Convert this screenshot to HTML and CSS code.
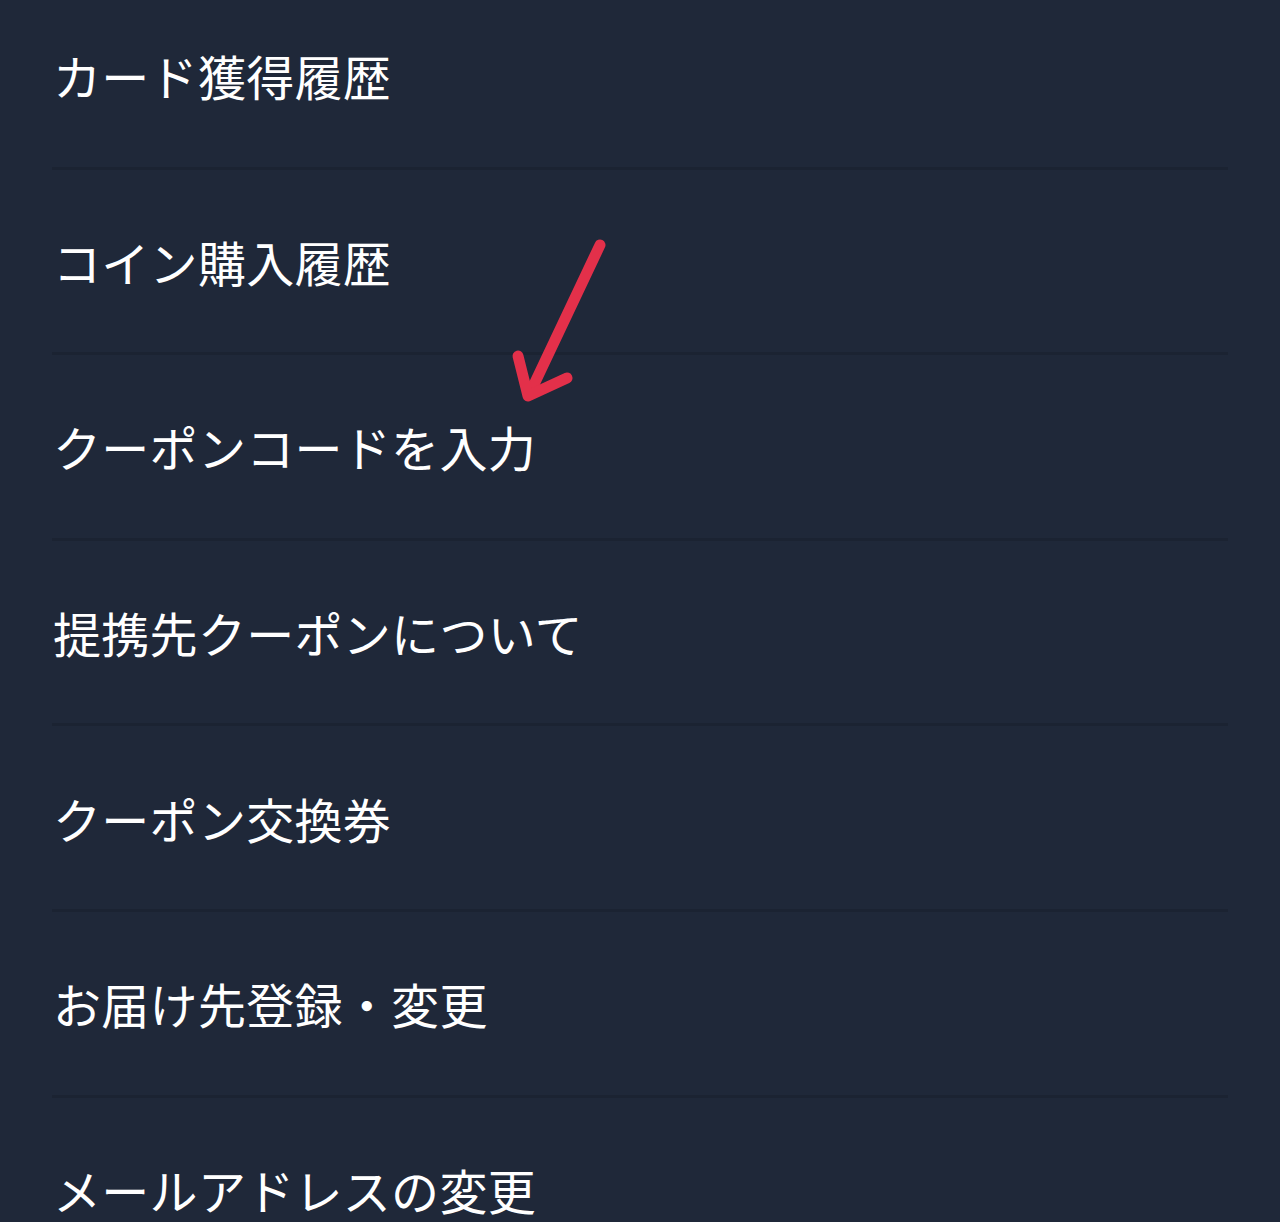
FILE: index.html
```html
<!DOCTYPE html>
<html lang="ja">
<head>
<meta charset="utf-8">
<link rel="stylesheet" href="styles.css">
</head>
<body>
<div class="page">
  <ul class="menu">
    <li class="item">カード獲得履歴</li>
    <li class="item">コイン購入履歴</li>
    <li class="item">クーポンコードを入力</li>
    <li class="item">提携先クーポンについて</li>
    <li class="item">クーポン交換券</li>
    <li class="item">お届け先登録・変更</li>
    <li class="item">メールアドレスの変更</li>
  </ul>
  <svg class="arrow" width="120" height="180" viewBox="0 0 120 180">
    <g fill="none" stroke="#e3304a" stroke-width="11" stroke-linecap="round" stroke-linejoin="round">
      <line x1="100" y1="10" x2="30" y2="158"/>
      <polyline points="18,121 28,161 67,143"/>
    </g>
  </svg>
</div>
</body>
</html>
```
FILE: styles.css
```css
html, body {
  margin: 0;
  padding: 0;
  background: #1f2839;
  overflow: hidden;
}
.page {
  position: relative;
  width: 1280px;
  height: 1222px;
  overflow: hidden;
  font-family: "Noto Sans CJK JP", "Noto Sans", sans-serif;
  color: #ffffff;
}
.menu {
  list-style: none;
  margin: -16px 52px 0 52px;
  padding: 0;
}
.item {
  height: 182.6px;
  display: flex;
  align-items: center;
  padding-left: 1px;
  border-bottom: 3px solid #1b2332;
  font-size: 48px;
  line-height: 1;
  font-weight: 400;
  letter-spacing: 0.3px;
}
.arrow {
  position: absolute;
  left: 500px;
  top: 235px;
}
```
